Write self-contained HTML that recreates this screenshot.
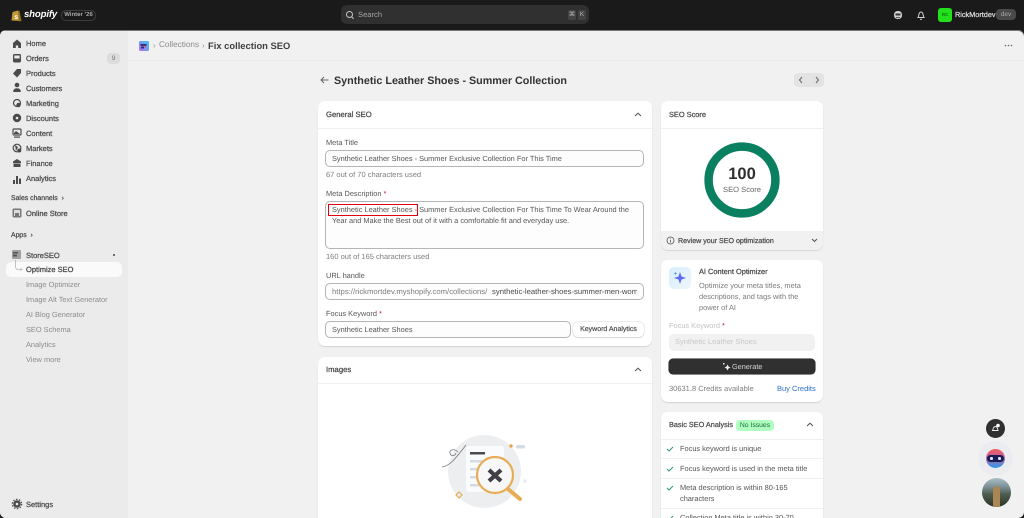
<!DOCTYPE html>
<html><head><meta charset="utf-8"><style>
*{box-sizing:border-box}
html,body{margin:0;padding:0;width:1024px;height:518px;overflow:hidden;background:#1a1a1a}
#w{position:absolute;left:0;top:0;width:1024px;height:518px;overflow:hidden;background:#1a1a1a;font-family:"Liberation Sans",sans-serif;color:#303030;text-rendering:geometricPrecision;filter:blur(.3px)}
.a{position:absolute;white-space:nowrap}
.t{position:absolute;white-space:nowrap;font-size:8px;line-height:12px;margin-top:1px}
.nav{color:#4a4a4a;font-weight:400;-webkit-text-stroke:.25px #4a4a4a;left:26px;font-size:7.5px}
.sub{color:#8a8a8a;left:26px;font-size:7.4px}
.card{position:absolute;background:#fff;border-radius:7px;box-shadow:0 1px 1px rgba(0,0,0,.12)}
.inp{position:absolute;background:#fdfdfd;border:1px solid #b5b5b5;border-radius:5px}
.lab{color:#555;font-size:7.4px}
.help{color:#7d7d7d;font-size:7.5px}
.val{color:#555;font-size:7.4px}
.h{font-weight:400;-webkit-text-stroke:.25px #4a4a4a;color:#4a4a4a;font-size:7.7px}
.d{color:#7a7a7a;font-size:7.4px}
.c{color:#555;font-size:7.4px}
.line{position:absolute;height:1px;background:#f0f0f0}
svg{position:absolute;overflow:visible}
</style></head><body><div id="w">
<!-- top bar -->
<svg style="left:11px;top:9px" width="11" height="13" viewBox="0 0 11 13"><path d="M1.500 3 L7 1.500 L10.500 12 L.500 11.500Z" fill="#c29a35"/><path d="M7 1.500 L8.500 2 L10.500 12 L8 12.500Z" fill="#8f7020"/><text x="3.200" y="10" font-size="7" font-weight="700" fill="#fff" font-family="Liberation Sans">s</text></svg>
<div class="a" style="left:24px;top:7px;font-size:9.600px;letter-spacing:-.15px;line-height:16px;font-weight:700;font-style:italic;color:#fff">shopify</div>
<div class="a" style="left:61px;top:10px;width:35px;height:11px;border:1px solid #3d3d3d;border-radius:5px;font-size:6px;line-height:9px;text-align:center;color:#a8a8a8;font-weight:700">Winter ’26</div>
<div class="a" style="left:341px;top:5px;width:248px;height:19px;background:#303030;border-radius:6px"></div>
<svg style="left:345px;top:10px" width="10" height="10" viewBox="0 0 10 10" fill="none" stroke="#c4c4c4" stroke-width="1"><circle cx="4.500" cy="4.500" r="3"/><path d="M6.700 6.700 L8.500 9"/></svg>
<div class="a" style="left:358px;top:9px;font-size:7.600px;line-height:11px;color:#a6a6a6">Search</div>
<div class="a" style="left:568px;top:10px;width:8px;height:10px;background:#434343;border-radius:2px;font-size:6.500px;line-height:10px;text-align:center;color:#b5b5b5">⌘</div>
<div class="a" style="left:578px;top:10px;width:8px;height:10px;background:#434343;border-radius:2px;font-size:6.500px;line-height:10px;text-align:center;color:#b5b5b5">K</div>
<svg style="left:893px;top:10px" width="10" height="10" viewBox="0 0 10 10"><rect x="1" y="1" width="8" height="8" rx="3.500" fill="#d0d0d0"/><rect x="2.500" y="3.500" width="5" height="2" fill="#333"/><rect x="3" y="7" width="4" height="1" fill="#555"/></svg>
<svg style="left:916px;top:10px" width="10" height="11" viewBox="0 0 10 11" fill="none" stroke="#d4d4d4" stroke-width="1"><path d="M2 7.500 C3 6 2.500 2 5 2 C7.500 2 7 6 8 7.500Z"/><path d="M4 9.300 H6"/></svg>
<div class="a" style="left:938px;top:8px;width:14px;height:14px;background:#22e01b;border-radius:3px;font-size:4.500px;line-height:14px;text-align:center;color:#0c7a0a;font-weight:700">RC</div>
<div class="a" style="left:955px;top:9px;font-size:7.300px;line-height:11px;-webkit-text-stroke:.25px #dcdcdc;color:#dcdcdc">RickMortdev</div>
<div class="a" style="left:996px;top:9px;width:20px;height:11px;background:#4a4a4a;border-radius:4px;font-size:6.500px;line-height:11px;text-align:center;color:#a8a8a8">dev</div>

<!-- shell -->
<div class="a" style="left:0;top:30px;width:1024px;height:488px;background:#f1f1f1;border-radius:6px;overflow:hidden;box-shadow:inset 0 1px 0 #777">
<div class="a" style="left:0;top:1px;width:128px;height:488px;background:#ebebeb"></div>
<div class="a" style="left:128px;top:30px;width:896px;height:1px;background:#ebebeb"></div>
</div>

<!-- nav icons -->
<svg style="left:12px;top:39px" width="10" height="150" viewBox="0 0 10 150" fill="#4a4a4a">
<path d="M5 .5 L9 4 V9 H6.200 V6.500 H3.800 V9 H1 V4Z"/>
<path d="M1 16.500 Q1 15 2.500 15 H7.500 Q9 15 9 16.500 V22 Q9 23.500 7.500 23.500 H2.500 Q1 23.500 1 22Z M2.300 16.500 V19.500 H7.700 V16.500Z" fill-rule="evenodd"/>
<path d="M5 30 H9 V34 L5 38.500 L1 34.500Z"/>
<circle cx="5" cy="46" r="2.300"/><path d="M1.200 53 Q1.200 49.300 5 49.300 Q8.800 49.300 8.800 53Z"/>
<circle cx="5" cy="64" r="3.500" fill="none" stroke="#4a4a4a" stroke-width="1.200"/><circle cx="6.500" cy="66" r="2.200"/>
<circle cx="5" cy="79" r="4.200"/><circle cx="5" cy="79" r="1.300" fill="#ebebeb"/>
<rect x="1" y="90" width="8" height="6" rx="1" fill="none" stroke="#4a4a4a" stroke-width="1.200"/><path d="M2 94 L4 92 L8 95 H2Z"/><rect x="2" y="97.500" width="6" height="1.200"/>
<circle cx="5" cy="109" r="3.800" fill="none" stroke="#4a4a4a" stroke-width="1.200"/><path d="M3 106 L6 108 L4 112Z"/><circle cx="7.300" cy="111.500" r="2"/>
<path d="M5 120 L9 122.500 V124 H1 V122.500Z"/><rect x="1.500" y="124.500" width="7" height="3.500"/>
<rect x="1" y="141" width="2" height="4"/><rect x="4" y="137" width="2" height="8"/><rect x="7" y="139.500" width="2" height="5.500"/>
</svg>
<div class="t nav" style="top:37px">Home</div>
<div class="t nav" style="top:52px">Orders</div>
<div class="a" style="left:107px;top:53px;width:13px;height:11px;background:#dcdcdc;border-radius:4px;font-size:6.500px;line-height:11px;text-align:center;color:#777">9</div>
<div class="t nav" style="top:67px">Products</div>
<div class="t nav" style="top:82px">Customers</div>
<div class="t nav" style="top:97px">Marketing</div>
<div class="t nav" style="top:112px">Discounts</div>
<div class="t nav" style="top:127px">Content</div>
<div class="t nav" style="top:142px">Markets</div>
<div class="t nav" style="top:157px">Finance</div>
<div class="t nav" style="top:172px">Analytics</div>
<div class="t nav" style="top:192px;left:11px;font-size:6.900px">Sales channels &nbsp;<span style="font-weight:400">›</span></div>
<svg style="left:12px;top:208px" width="10" height="10" viewBox="0 0 10 10"><rect x=".500" y=".500" width="9" height="9" rx="1.500" fill="#777"/><rect x="2" y="2" width="6" height="6" fill="#dcdcdc"/><rect x="3" y="5" width="4" height="3" fill="#777"/></svg>
<div class="t nav" style="top:207px">Online Store</div>
<div class="t nav" style="top:229px;left:11px;font-size:6.900px">Apps &nbsp;<span style="font-weight:400">›</span></div>
<svg style="left:12px;top:250px" width="9" height="9" viewBox="0 0 9 9"><rect width="9" height="9" rx="1" fill="#a0a0a0"/><rect x="1" y="2" width="5" height="1.500" fill="#555"/><rect x="1" y="4.500" width="4" height="2" fill="#555"/></svg>
<div class="t nav" style="top:249px">StoreSEO</div>
<div class="a" style="left:113px;top:254px;width:2px;height:2px;background:#444;border-radius:50%"></div>
<div class="a" style="left:6px;top:262px;width:116px;height:15px;background:#fafafa;border-radius:5px"></div>
<svg style="left:14px;top:260px" width="10" height="12" viewBox="0 0 10 12" fill="none" stroke="#b5b5b5" stroke-width=".8"><path d="M1.500 0 V6 Q1.500 9.500 4 9.500 H7.500"/><path d="M6.500 8.500 L8 9.500 L6.500 10.500"/></svg>
<div class="t nav" style="top:263px;color:#404040">Optimize SEO</div>
<div class="t sub" style="top:278px">Image Optimizer</div>
<div class="t sub" style="top:293px">Image Alt Text Generator</div>
<div class="t sub" style="top:308px">AI Blog Generator</div>
<div class="t sub" style="top:323px">SEO Schema</div>
<div class="t sub" style="top:338px">Analytics</div>
<div class="t sub" style="top:353px">View more</div>
<svg style="left:12px;top:499px" width="10" height="10" viewBox="0 0 10 10"><circle cx="5" cy="5" r="3.800" fill="#4a4a4a"/><circle cx="5" cy="5" r="4.700" fill="none" stroke="#4a4a4a" stroke-width="1.200" stroke-dasharray="1.500 1.500"/><circle cx="5" cy="5" r="1.300" fill="#ebebeb"/></svg>
<div class="t nav" style="top:498px">Settings</div>

<!-- breadcrumb -->
<svg style="left:139px;top:41px" width="10" height="10" viewBox="0 0 10 10"><defs><linearGradient id="g" x1="0" y1="1" x2="1" y2="0"><stop offset="0" stop-color="#b46cf0"/><stop offset="1" stop-color="#35c9ef"/></linearGradient></defs><rect width="10" height="10" rx="1.500" fill="url(#g)"/><rect x="1.500" y="3" width="6" height="1.800" fill="#3b2770"/><rect x="2" y="5.500" width="3" height="2" fill="#3b2770"/><rect x="5.500" y="5" width="1.500" height="1.500" fill="#e04a5f"/></svg>
<div class="a" style="left:153px;top:40px;font-size:8px;line-height:12px;color:#999">›</div>
<div class="a" style="left:159px;top:39px;font-size:8.200px;line-height:12px;color:#8a8a8a">Collections</div>
<div class="a" style="left:202px;top:40px;font-size:8px;line-height:12px;color:#999">›</div>
<div class="a" style="left:208px;top:39px;font-size:9.400px;line-height:13px;font-weight:700;color:#404040">Fix collection SEO</div>
<svg style="left:1004px;top:44px" width="9" height="3" viewBox="0 0 9 3" fill="#666"><circle cx="1.500" cy="1.500" r=".8"/><circle cx="4.500" cy="1.500" r=".8"/><circle cx="7.500" cy="1.500" r=".8"/></svg>

<!-- page title -->
<svg style="left:320px;top:76px" width="9" height="8" viewBox="0 0 9 8" fill="none" stroke="#666" stroke-width="1"><path d="M8.500 4 H1 M4 1 L1 4 L4 7"/></svg>
<div class="a" style="left:334px;top:74px;font-size:10.750px;line-height:15px;font-weight:700;color:#333">Synthetic Leather Shoes - Summer Collection</div>
<div class="a" style="left:794px;top:73px;width:30px;height:14px;background:#e3e3e3;border-radius:4px"></div>
<svg style="left:798px;top:76px" width="22" height="8" viewBox="0 0 22 8" fill="none" stroke="#666" stroke-width="1"><path d="M4 1 L1.500 4 L4 7 M18 1 L20.500 4 L18 7"/></svg>

<!-- General SEO -->
<div class="card" style="left:318px;top:101px;width:334px;height:245px"></div>
<div class="t h" style="left:326px;top:108px">General SEO</div>
<svg style="left:634px;top:112px" width="8" height="5" viewBox="0 0 8 5" fill="none" stroke="#555" stroke-width="1"><path d="M1 4 L4 1.200 L7 4"/></svg>
<div class="line" style="left:318px;top:128px;width:334px"></div>
<div class="t lab" style="left:326px;top:136px">Meta Title</div>
<div class="inp" style="left:325px;top:150px;width:319px;height:17px"></div>
<div class="t val" style="left:332px;top:152px">Synthetic Leather Shoes - Summer Exclusive Collection For This Time</div>
<div class="t help" style="left:326px;top:168px">67 out of 70 characters used</div>
<div class="t lab" style="left:326px;top:187px">Meta Description <span style="color:#c4203c">*</span></div>
<div class="inp" style="left:325px;top:201px;width:319px;height:48px"></div>
<div class="t val" style="left:332px;top:203px">Synthetic Leather Shoes - Summer Exclusive Collection For This Time To Wear Around the</div>
<div class="t val" style="left:332px;top:214px">Year and Make the Best out of it with a comfortable fit and everyday use.</div>
<div class="a" style="left:328px;top:204px;width:90px;height:12px;border:1.800px solid #e3000f"></div>
<div class="t help" style="left:326px;top:250px">160 out of 165 characters used</div>
<div class="t lab" style="left:326px;top:269px">URL handle</div>
<div class="inp" style="left:325px;top:283px;width:319px;height:17px;overflow:hidden"></div>
<div class="t" style="left:332px;top:285px;color:#7d7d7d;font-size:7.700px">https://rickmortdev.myshopify.com/collections/</div>
<div class="t" style="left:492px;top:285px;width:145px;overflow:hidden;color:#4a4a4a;font-size:7.700px">synthetic-leather-shoes-summer-men-women</div>
<div class="t lab" style="left:326px;top:307px">Focus Keyword <span style="color:#c4203c">*</span></div>
<div class="inp" style="left:325px;top:321px;width:246px;height:17px"></div>
<div class="t val" style="left:332px;top:323px">Synthetic Leather Shoes</div>
<div class="a" style="left:573px;top:322px;width:71px;height:15px;background:#fff;border-radius:5px;box-shadow:0 0 0 .5px #ddd,0 1px 1px #ccc;font-size:7px;line-height:15px;text-align:center;-webkit-text-stroke:.2px #4a4a4a;color:#4a4a4a">Keyword Analytics</div>

<!-- Images -->
<div class="card" style="left:318px;top:357px;width:334px;height:170px"></div>
<div class="t h" style="left:326px;top:363px">Images</div>
<svg style="left:634px;top:367px" width="8" height="5" viewBox="0 0 8 5" fill="none" stroke="#555" stroke-width="1"><path d="M1 4 L4 1.200 L7 4"/></svg>
<div class="line" style="left:318px;top:383px;width:334px"></div>
<svg style="left:440px;top:434px" width="80" height="76" viewBox="440 434 80 76">
<circle cx="484.500" cy="471.500" r="36.500" fill="#eceef0"/>
<rect x="466" y="446" width="38" height="46" rx="3" fill="#fafbfc"/>
<rect x="470" y="452" width="15" height="2.500" fill="#4a4a4f"/>
<rect x="470" y="460" width="30" height="2.500" fill="#d5dbe4"/><rect x="470" y="468" width="24" height="2.500" fill="#d5dbe4"/><rect x="470" y="476" width="24" height="2.500" fill="#d5dbe4"/><rect x="470" y="484" width="30" height="2.500" fill="#d5dbe4"/>
<circle cx="495" cy="475" r="18" fill="#f7f7f8" stroke="#e8ac55" stroke-width="2.200"/>
<path d="M508 489 L520 499" stroke="#e8ac55" stroke-width="4" stroke-linecap="round"/>
<path d="M489 470 L501 481 M501 470 L489 481" stroke="#3f4147" stroke-width="4.200"/>
<circle cx="511" cy="446" r="1.700" fill="#e8a545"/><rect x="516" y="445" width="9" height="3.500" rx="1.700" fill="#d5dbe4"/>
<circle cx="525" cy="481" r="1.700" fill="#e8eaee"/>
<path d="M459 492 L462 495 L459 498 L456 495Z" fill="none" stroke="#e8ac55" stroke-width="1.200"/>
<path d="M442 467 C450 466 456 458 466 445 M458 452 C454 448 449 450 450 453 C451 457 455 456 456 453" fill="none" stroke="#777" stroke-width=".8"/>
</svg>

<!-- SEO score -->
<div class="card" style="left:661px;top:101px;width:162px;height:149px;overflow:hidden">
<div class="a" style="left:0;top:130px;width:162px;height:19px;background:#f1f1f1"></div>
</div>
<div class="t h" style="left:669px;top:108px;font-size:7.400px">SEO Score</div>
<div class="line" style="left:661px;top:128px;width:162px"></div>
<svg style="left:704px;top:142px" width="76" height="76" viewBox="0 0 76 76"><circle cx="38" cy="38" r="33.400" fill="none" stroke="#0a8060" stroke-width="8.500"/></svg>
<div class="a" style="left:704px;top:164px;width:76px;text-align:center;font-size:16.500px;line-height:20px;font-weight:700;color:#303030">100</div>
<div class="a" style="left:704px;top:184px;width:76px;text-align:center;font-size:7.600px;line-height:12px;color:#666">SEO Score</div>
<svg style="left:666px;top:236px" width="9" height="9" viewBox="0 0 9 9" fill="none" stroke="#555" stroke-width=".8"><circle cx="4.500" cy="4.500" r="3.500"/><path d="M4.500 4 V6.500 M4.500 2.500 V3.200"/></svg>
<div class="t" style="left:678px;top:234px;-webkit-text-stroke:.25px #4a4a4a;color:#4a4a4a;font-size:7.100px">Review your SEO optimization</div>
<svg style="left:811px;top:238px" width="7" height="5" viewBox="0 0 7 5" fill="none" stroke="#555" stroke-width="1"><path d="M1 1 L3.500 3.500 L6 1"/></svg>

<!-- AI optimizer -->
<div class="card" style="left:661px;top:260px;width:162px;height:142px"></div>
<div class="a" style="left:669px;top:267px;width:22px;height:22px;border-radius:5px;background:linear-gradient(135deg,#d8eefc,#eef6fd)"></div>
<svg style="left:672px;top:270px" width="16" height="16" viewBox="0 0 16 16"><path d="M8 2 L9.500 6.500 L14 8 L9.500 9.500 L8 14 L6.500 9.500 L2 8 L6.500 6.500Z" fill="#5b6cf0"/><path d="M3.500 1.500 L4 3 L5.500 3.500 L4 4 L3.500 5.500 L3 4 L1.500 3.500 L3 3Z" fill="#4aa0e8"/></svg>
<div class="t h" style="left:699px;top:265px;font-size:7.400px">AI Content Optimizer</div>
<div class="t d" style="left:699px;top:279px">Optimize your meta titles, meta</div>
<div class="t d" style="left:699px;top:290px">descriptions, and tags with the</div>
<div class="t d" style="left:699px;top:301px">power of AI</div>
<div class="t" style="left:669px;top:319px;color:#c2c2c2;font-size:7.400px">Focus Keyword <span style="color:#c4203c">*</span></div>
<div class="a" style="left:669px;top:334px;width:146px;height:17px;background:#f1f1f1;border-radius:5px"></div>
<div class="t" style="left:675px;top:335px;color:#c8c8c8;font-size:7.500px">Synthetic Leather Shoes</div>
<div class="a" style="left:669px;top:359px;width:146px;height:15px;background:#303030;border-radius:4px;box-shadow:0 0 0 .5px #111"></div>
<svg style="left:722px;top:362px" width="9" height="9" viewBox="0 0 9 9" fill="#eee"><path d="M5.500 2.500 L6.500 4.500 L8.500 5.500 L6.500 6.500 L5.500 8.500 L4.500 6.500 L2.500 5.500 L4.500 4.500Z"/><rect x="1" y="1" width="1.500" height="1.500"/></svg>
<div class="t" style="left:732px;top:360px;color:#d8d8d8;font-size:7.300px">Generate</div>
<div class="t" style="left:669px;top:382px;color:#7d7d7d;font-size:7.500px">30631.8 Credits available</div>
<div class="t" style="left:777px;top:382px;color:#2c6ecb;font-size:7.500px">Buy Credits</div>

<!-- basic -->
<div class="card" style="left:661px;top:412px;width:162px;height:120px"></div>
<div class="t h" style="left:669px;top:418px;font-size:7.300px">Basic SEO Analysis</div>
<div class="a" style="left:736px;top:420px;width:38px;height:11px;background:#aefebf;border-radius:4px;font-size:6.800px;line-height:11px;text-align:center;color:#1f6b3c">No Issues</div>
<svg style="left:806px;top:422px" width="8" height="5" viewBox="0 0 8 5" fill="none" stroke="#555" stroke-width="1"><path d="M1 4 L4 1.200 L7 4"/></svg>
<div class="line" style="left:661px;top:439px;width:162px"></div>
<div class="line" style="left:661px;top:458px;width:162px"></div>
<div class="line" style="left:661px;top:478px;width:162px"></div>
<div class="line" style="left:661px;top:508px;width:162px"></div>
<svg style="left:666px;top:445px" width="8" height="72" viewBox="0 0 8 72" fill="none" stroke="#2f9a72" stroke-width="1"><path d="M1 4 L3 6 L7 2 M1 24 L3 26 L7 22 M1 43 L3 45 L7 41 M1 73 L3 75 L7 71"/></svg>
<div class="t c" style="left:680px;top:442px">Focus keyword is unique</div>
<div class="t c" style="left:680px;top:462px">Focus keyword is used in the meta title</div>
<div class="t c" style="left:680px;top:481px">Meta description is within 80-165</div>
<div class="t c" style="left:680px;top:492px">characters</div>
<div class="t c" style="left:680px;top:511px">Collection Meta title is within 30-70</div>

<!-- floating -->
<div class="a" style="left:986px;top:419px;width:19px;height:19px;border-radius:50%;background:#303030"></div>
<svg style="left:990px;top:423px" width="11" height="11" viewBox="0 0 11 11"><path d="M2.500 7.500 C3.500 6 3 3.500 5.500 3.500 C7.500 3.500 7.500 6 8 7.500Z" fill="none" stroke="#eee" stroke-width=".9"/><circle cx="8" cy="2.500" r="1.800" fill="#fff"/></svg>
<div class="a" style="left:978px;top:441px;width:35px;height:35px;border-radius:50%;background:#ebecef"></div>
<div class="a" style="left:986px;top:449px;width:19px;height:19px;border-radius:50%;background:linear-gradient(180deg,#f0605c 0%,#d05a90 35%,#2a9cf0 100%)"></div>
<div class="a" style="left:987px;top:455px;width:17px;height:7px;border-radius:3.500px;background:#1a1a55"></div>
<div class="a" style="left:990px;top:457px;width:2.500px;height:2.500px;border-radius:50%;background:#e8e8ff"></div>
<div class="a" style="left:998px;top:457px;width:2.500px;height:2.500px;border-radius:50%;background:#e8e8ff"></div>
<div class="a" style="left:982px;top:478px;width:29px;height:29px;border-radius:50%;overflow:hidden;background:linear-gradient(180deg,#a9bfc4 0%,#7d9298 30%,#4f5f4f 55%,#2a3327 100%)">
<div class="a" style="left:11px;top:8px;width:7px;height:21px;background:#a98654;border-radius:3.500px 3.500px 0 0"></div>
</div>
</div></body></html>
